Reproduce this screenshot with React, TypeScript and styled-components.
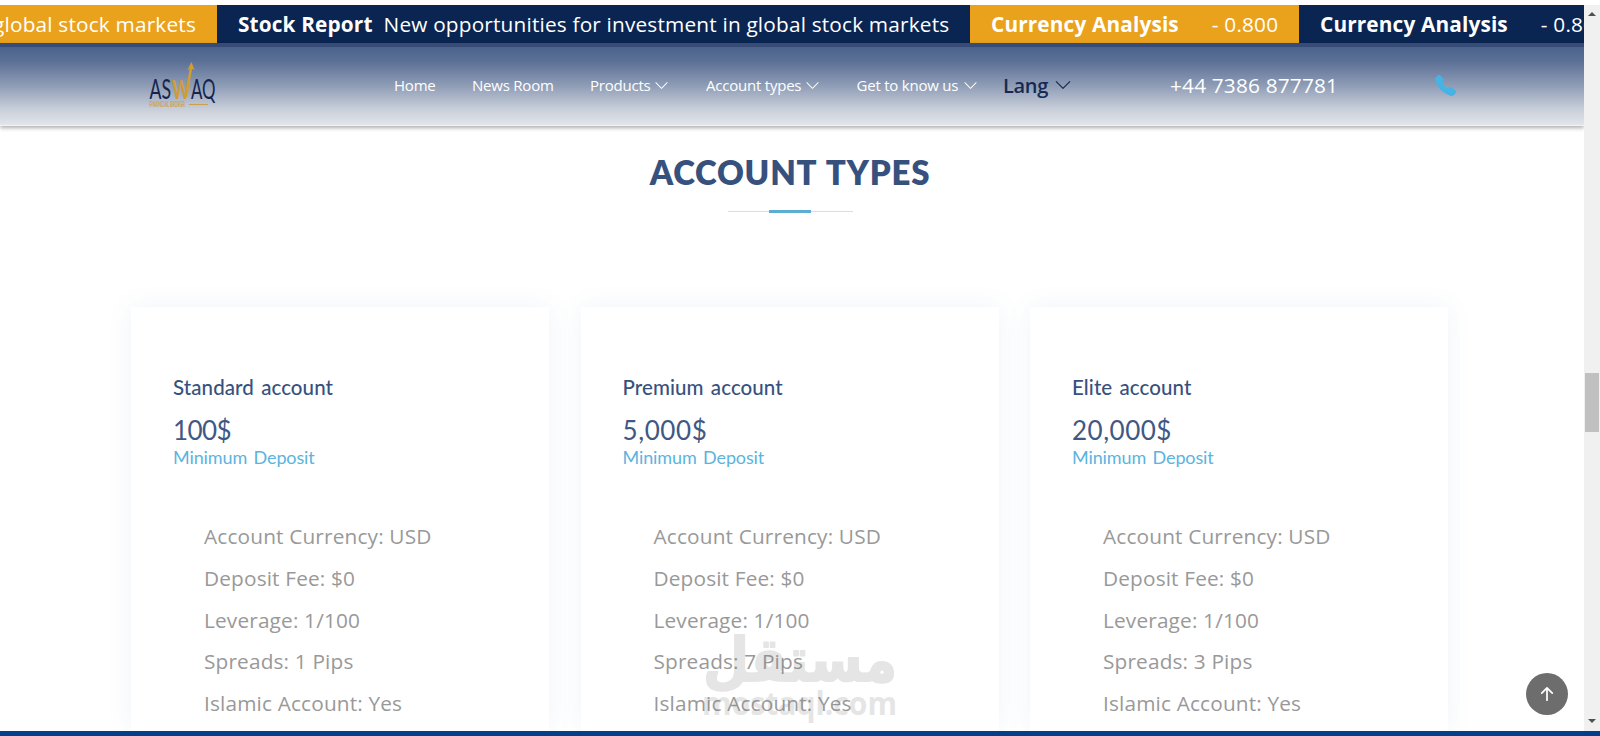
import React from 'react';
import styled, { createGlobalStyle } from 'styled-components';
import { BsArrowUpShort, BsChevronDown, BsTelephoneFill } from 'react-icons/bs';

const GlobalStyle = createGlobalStyle`
  * { box-sizing: border-box; }
  body {
    margin: 0;
    background: #fff;
    font-family: 'Open Sans', 'Liberation Sans', sans-serif;
  }
`;

const Screen = styled.div`
  display: flex;
  flex-direction: column;
  width: 1600px;
  height: 736px;
  padding-top: 5px;
  overflow: hidden;
  background: #fff;
`;

const Viewport = styled.div`
  display: flex;
  flex: 1;
  min-height: 0;
`;

const Page = styled.div`
  position: relative;
  display: flex;
  flex-direction: column;
  width: 1584px;
  overflow: hidden;
`;

const Ticker = styled.div`
  display: flex;
  flex: none;
  height: 38px;
  overflow: hidden;
`;

const TickerItem = styled.div<{ $width: number; $tone: 'gold' | 'navy'; $alignEnd?: boolean }>`
  display: flex;
  flex: none;
  align-items: center;
  justify-content: ${(p) => (p.$alignEnd ? 'flex-end' : 'flex-start')};
  width: ${(p) => p.$width}px;
  padding: 0 21px;
  overflow: hidden;
  white-space: nowrap;
  font-size: 20.8px;
  line-height: 38px;
  letter-spacing: 0.18px;
  color: #fff;
  background: ${(p) => (p.$tone === 'gold' ? '#eaa21c' : '#0a2552')};
`;

const TickerTitle = styled.b<{ $gap: number }>`
  margin-right: ${(p) => p.$gap}px;
  font-weight: 700;
  letter-spacing: 0.14px;
`;

const Header = styled.header`
  z-index: 1;
  display: flex;
  flex: none;
  align-items: center;
  height: 82.5px;
  padding: 0 0 1.5px 148px;
  border-top: 4px solid #364c76;
  border-bottom: 1px solid #f1f3f5;
  background: linear-gradient(#4b638b 0%, #5b7096 18%, #8f9db6 50%, #c9cfda 80%, #e2e6eb 100%);
  background-clip: padding-box;
  box-shadow: 0 2px 4px rgba(0, 0, 0, 0.32);
`;

const Logo = styled.svg`
  flex: none;
  width: 70px;
  height: 48px;
  margin-right: 176px;
  overflow: visible;
`;

const Nav = styled.nav`
  display: flex;
  align-items: center;
  color: #fff;
  white-space: nowrap;
`;

const NavLink = styled.a<{ $width: number }>`
  display: flex;
  align-items: center;
  justify-content: space-between;
  width: ${(p) => p.$width}px;
  margin-right: 37px;
  font-size: 15px;
  font-weight: 500;
  letter-spacing: -0.22px;
`;

const Chevron = styled(BsChevronDown)<{ $size: number }>`
  flex: none;
  width: ${(p) => p.$size}px;
  height: ${(p) => p.$size}px;
`;

const Language = styled.a`
  display: flex;
  align-items: center;
  justify-content: space-between;
  width: 69px;
  margin-left: -11.5px;
  font-size: 20px;
  font-weight: 600;
  letter-spacing: -0.3px;
  color: #152a52;
`;

const PhoneNumber = styled.span`
  width: 170px;
  margin-left: 98px;
  font-size: 20.8px;
  letter-spacing: 0.18px;
  color: #fff;
  white-space: nowrap;
`;

const PhoneIcon = styled(BsTelephoneFill)`
  width: 21px;
  height: 21px;
  margin-left: 95px;
  color: #47b2e4;
`;

const Section = styled.section`
  display: flex;
  flex: 1;
  flex-direction: column;
  align-items: center;
  min-height: 0;
  padding-top: 26.5px;
`;

const Title = styled.h2`
  margin: 0 4px 0 0;
  font-family: Lato, 'Liberation Sans', sans-serif;
  font-size: 33px;
  font-weight: 800;
  line-height: 40px;
  letter-spacing: 0.8px;
  word-spacing: 2px;
  color: #37517e;
`;

const Divider = styled.div`
  display: flex;
  align-items: center;
  justify-content: center;
  width: 125px;
  height: 3px;
  margin-top: 18px;
  margin-right: 4px;
  background: linear-gradient(transparent 1px, #dddddd 1px, #dddddd 2px, transparent 2px);
`;

const DividerAccent = styled.span`
  width: 42px;
  height: 3px;
  background: #5badd3;
`;

const Cards = styled.div`
  display: grid;
  flex: 1;
  grid-template-columns: repeat(3, 418px);
  gap: 31.5px;
  width: 1317px;
  margin-top: 94px;
  margin-right: 5px;
`;

const Card = styled.article`
  padding: 64px 42px 0;
  background: #fff;
  box-shadow: 0 0 24px rgba(55, 110, 150, 0.08);
  white-space: nowrap;
`;

const CardTitle = styled.h3`
  margin: 0;
  font-family: Lato, 'Liberation Sans', sans-serif;
  font-size: 20.5px;
  font-weight: 500;
  line-height: 32px;
  letter-spacing: 0.08px;
  word-spacing: 2px;
  color: #37517e;
`;

const Price = styled.div<{ $tracking: number }>`
  margin-top: 10px;
  font-family: Lato, 'Liberation Sans', sans-serif;
  font-size: 26px;
  line-height: 34px;
  letter-spacing: ${(p) => p.$tracking}px;
  color: #3f5884;
`;

const PriceNote = styled.div`
  font-family: Lato, 'Liberation Sans', sans-serif;
  font-size: 18px;
  line-height: 21px;
  letter-spacing: -0.12px;
  word-spacing: 2px;
  color: #5bb4de;
`;

const Features = styled.ul`
  margin: 48px 0 0;
  padding: 0 0 0 31px;
  list-style: none;
`;

const Feature = styled.li`
  height: 41.8px;
  font-size: 20.8px;
  line-height: 41.8px;
  letter-spacing: 0.16px;
  color: #999;
`;

const Watermark = styled.svg`
  position: absolute;
  left: 700px;
  top: 620px;
  width: 200px;
  height: 105px;
  opacity: 0.2;
`;

const BackToTop = styled.button`
  position: absolute;
  right: 16px;
  bottom: 16px;
  z-index: 2;
  display: flex;
  align-items: center;
  justify-content: center;
  width: 42px;
  height: 42px;
  padding: 0;
  border: 0;
  border-radius: 50%;
  color: #fff;
  background: #6d6d6d;
`;

const Scrollbar = styled.div`
  display: flex;
  flex-direction: column;
  align-items: center;
  width: 16px;
  padding: 7px 0 8px;
  background: #f0f0f0;
`;

const ScrollArrow = styled.span<{ $down?: boolean }>`
  width: 0;
  height: 0;
  margin-top: ${(p) => (p.$down ? 'auto' : '0')};
  border: solid transparent;
  border-width: ${(p) => (p.$down ? '4px 4px 0' : '0 4px 4px')};
  border-top-color: ${(p) => (p.$down ? '#505050' : 'transparent')};
  border-bottom-color: ${(p) => (p.$down ? 'transparent' : '#505050')};
`;

const ScrollThumb = styled.span`
  width: 14px;
  height: 59px;
  margin-top: 357px;
  background: #c0c0c0;
`;

const Taskbar = styled.div`
  flex: none;
  height: 5px;
  background: #043f8c;
`;

const navItems = [
  { label: 'Home', width: 41 },
  { label: 'News Room', width: 81 },
  { label: 'Products', width: 79, menu: true },
  { label: 'Account types', width: 113.5, menu: true },
  { label: 'Get to know us', width: 121, menu: true },
];

const accounts = [
  { name: 'Standard account', price: '100$', tracking: -0.6, spreads: '1 Pips' },
  { name: 'Premium account', price: '5,000$', tracking: 0.6, spreads: '7 Pips' },
  { name: 'Elite account', price: '20,000$', tracking: 0.5, spreads: '3 Pips' },
];

export default function App() {
  return (
    <Screen>
      <GlobalStyle />
      <Viewport>
        <Page>
          <Ticker>
            <TickerItem $width={217} $tone="gold" $alignEnd>global stock markets</TickerItem>
            <TickerItem $width={753} $tone="navy">
              <TickerTitle $gap={11}>Stock Report</TickerTitle>
              New opportunities for investment in global stock markets
            </TickerItem>
            <TickerItem $width={329} $tone="gold">
              <TickerTitle $gap={33}>Currency Analysis</TickerTitle>- 0.800
            </TickerItem>
            <TickerItem $width={329} $tone="navy">
              <TickerTitle $gap={33}>Currency Analysis</TickerTitle>- 0.800
            </TickerItem>
          </Ticker>

          <Header>
            <Logo viewBox="0 0 70 48" fontFamily="Lato, sans-serif">
              <text x="1.5" y="38" fontSize="27" fill="#15244f" textLength="21.5" lengthAdjust="spacingAndGlyphs">AS</text>
              <text x="24" y="38" fontSize="27" fontWeight="700" fill="#cf9c37" textLength="18" lengthAdjust="spacingAndGlyphs">W</text>
              <text x="43" y="38" fontSize="27" fill="#15244f" textLength="24.5" lengthAdjust="spacingAndGlyphs">AQ</text>
              <path d="M38 36 L43 7" stroke="#d49d2f" strokeWidth="2.4" fill="none" />
              <path d="M39.5 9 L43.5 1 L46.5 9 L43 7.5 Z" fill="#d49d2f" />
              <text x="1.5" y="46" fontSize="6.5" fontWeight="700" fill="#cfa04a" textLength="35.5" lengthAdjust="spacingAndGlyphs">FINANCIAL BROKER</text>
              <path d="M41 43.5 H60" stroke="#cfa04a" strokeWidth="1" />
            </Logo>
            <Nav>
              {navItems.map((item) => (
                <NavLink key={item.label} $width={item.width}>
                  {item.label}
                  {item.menu && <Chevron $size={15} />}
                </NavLink>
              ))}
              <Language>
                Lang
                <Chevron $size={18} />
              </Language>
            </Nav>
            <PhoneNumber>+44 7386 877781</PhoneNumber>
            <PhoneIcon />
          </Header>

          <Section>
            <Title>ACCOUNT TYPES</Title>
            <Divider>
              <DividerAccent />
            </Divider>
            <Cards>
              {accounts.map((account) => (
                <Card key={account.name}>
                  <CardTitle>{account.name}</CardTitle>
                  <Price $tracking={account.tracking}>{account.price}</Price>
                  <PriceNote>Minimum Deposit</PriceNote>
                  <Features>
                    <Feature>Account Currency: USD</Feature>
                    <Feature>Deposit Fee: $0</Feature>
                    <Feature>Leverage: 1/100</Feature>
                    <Feature>Spreads: {account.spreads}</Feature>
                    <Feature>Islamic Account: Yes</Feature>
                  </Features>
                </Card>
              ))}
            </Cards>
          </Section>

          <Watermark viewBox="0 0 200 105" fill="#808080" stroke="#808080" fontWeight="700">
            <text x="197" y="56" direction="rtl" fontFamily="'DejaVu Sans', sans-serif" fontSize="61" strokeWidth="2" strokeLinejoin="round" textLength="194" lengthAdjust="spacingAndGlyphs">مستقل</text>
            <text x="2" y="90" fontFamily="'Open Sans', sans-serif" fontSize="32" stroke="none" textLength="195" lengthAdjust="spacingAndGlyphs">mostaql.com</text>
          </Watermark>
          <BackToTop aria-label="Back to top">
            <BsArrowUpShort size={28} />
          </BackToTop>
        </Page>
        <Scrollbar>
          <ScrollArrow />
          <ScrollThumb />
          <ScrollArrow $down />
        </Scrollbar>
      </Viewport>
      <Taskbar />
    </Screen>
  );
}
